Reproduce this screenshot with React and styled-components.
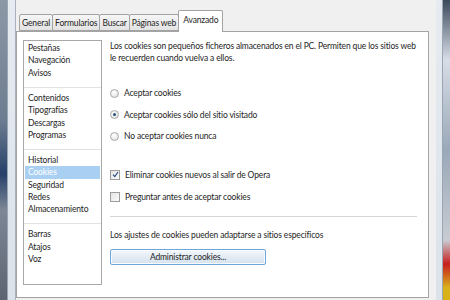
import React from 'react';
import styled, { createGlobalStyle } from 'styled-components';

const GlobalStyle = createGlobalStyle`
    html, body {
        margin: 0;
        padding: 0;
        width: 450px;
        height: 300px;
        overflow: hidden;
    }
    body {
        font-family: 'Lato', 'Noto Sans', sans-serif;
        font-size: 8.5px;
        letter-spacing: -0.15px;
        color: #1e1e1e;
    }
`;

const Screen = styled.div`
    display: flex;
    width: 450px;
    height: 300px;
`;

const Backdrop = styled.div`
    width: ${props => props.width}px;
    background: ${props => props.bg};
`;

const Frame = styled.div`
    flex: 1;
    display: flex;
    padding: 0 6px 0 7px;
    background: linear-gradient(180deg, #e6ebf1 0%, #dbe2ea 100%);
    border-left: 1px solid #9aa6b3;
    border-right: 1px solid #9aa6b3;
`;

const Body = styled.div`
    flex: 1;
    display: flex;
    flex-direction: column;
    background: #f0f0f0;
    border-left: 1px solid #a9b2bc;
    padding: 10px 7px 2px 0;
`;

const TabStrip = styled.div`
    display: flex;
    align-items: flex-end;
    height: 21px;
    padding-left: 3px;
    position: relative;
    z-index: 1;
`;

const Tab = styled.div`
    height: ${props => (props.$active ? 22 : 17)}px;
    padding: ${props => (props.$active ? '4px 4px 0' : '0 2px')};
    display: flex;
    align-items: ${props => (props.$active ? 'flex-start' : 'center')};
    box-sizing: border-box;
    border: 1px solid #a3a3a3;
    border-bottom: ${props => (props.$active ? 'none' : '1px solid #a3a3a3')};
    margin-right: -1px;
    margin-bottom: ${props => (props.$active ? '-1px' : '0')};
    background: ${props => (props.$active ? '#ffffff' : 'linear-gradient(180deg, #f6f6f6 0%, #e3e3e3 100%)')};
    border-radius: 2px 2px 0 0;
    white-space: nowrap;
`;

const Panel = styled.div`
    flex: 1;
    display: flex;
    gap: 8px;
    background: #ffffff;
    border: 1px solid #a3a3a3;
    padding: 8px 6px 12px 6px;
`;

const ListBox = styled.div`
    width: 77px;
    flex-shrink: 0;
    border: 1px solid #a8a8a8;
    background: #ffffff;
`;

const ListGroup = styled.div`
    padding: 4px 1px 7.6px;
    border-bottom: ${props => (props.$last ? 'none' : '1px solid #e2e2e2')};
    &:first-child {
        padding-top: 1px;
    }
`;

const ListItem = styled.div`
    height: 12.4px;
    line-height: 12.4px;
    padding-left: 3px;
    background: ${props => (props.$selected ? '#a9d0f2' : 'transparent')};
    color: ${props => (props.$selected ? '#ffffff' : '#1e1e1e')};
`;

const Content = styled.div`
    flex: 1;
    display: flex;
    flex-direction: column;
    padding-right: 5px;
`;

const Para = styled.p`
    margin: 0;
    line-height: 12px;
`;

const OptionGroup = styled.div`
    display: flex;
    flex-direction: column;
    gap: ${props => props.$gap}px;
    margin-top: ${props => props.$top}px;
`;

const Option = styled.label`
    display: flex;
    align-items: center;
    gap: 5px;
    height: 12px;
`;

const Radio = styled.span`
    width: 7px;
    height: 7px;
    border-radius: 50%;
    border: 1px solid #a8a8a8;
    background: radial-gradient(circle at 40% 35%, #ffffff 0%, #dcdcdc 100%);
    display: flex;
    align-items: center;
    justify-content: center;
    &::after {
        content: '';
        width: 3px;
        height: 3px;
        border-radius: 50%;
        background: ${props => (props.$checked ? '#2a4f7a' : 'transparent')};
    }
`;

const Box = styled.span`
    width: 8px;
    height: 8px;
    border: 1px solid #9c9c9c;
    background: linear-gradient(135deg, #e4e4e4 0%, #fafafa 100%);
    display: flex;
    align-items: center;
    justify-content: center;
`;

const Divider = styled.div`
    height: 1px;
    background: #d6d6d6;
    margin: ${props => props.$margin};
`;

const Button = styled.button`
    width: 156px;
    height: 16px;
    margin-top: 8px;
    padding: 0;
    font-family: inherit;
    font-size: inherit;
    letter-spacing: inherit;
    color: #1e1e1e;
    border: 1px solid #6fa6d6;
    border-radius: 2px;
    background: linear-gradient(180deg, #f3f7fb 0%, #e3ecf4 50%, #d4e2ee 100%);
    box-shadow: inset 0 0 0 1px #f8fbff;
`;

const Check = () => (
    <svg width="7" height="7" viewBox="0 0 7 7">
        <path d="M1 3.6 L2.8 5.6 L6 1" fill="none" stroke="#2b4f82" strokeWidth="1.2" />
    </svg>
);

const groups = [
    ['Pestañas', 'Navegación', 'Avisos'],
    ['Contenidos', 'Tipografías', 'Descargas', 'Programas'],
    ['Historial', 'Cookies', 'Seguridad', 'Redes', 'Almacenamiento'],
    ['Barras', 'Atajos', 'Voz'],
];

const tabs = ['General', 'Formularios', 'Buscar', 'Páginas web', 'Avanzado'];

export default function App() {
    return (
        <>
            <GlobalStyle />
            <Screen>
                <Backdrop width={7} bg="linear-gradient(180deg, #8d98a6 0%, #6d7c90 40%, #27406a 58%, #7d8796 70%, #5d6470 100%)" />
                <Frame>
                    <Body>
                        <TabStrip>
                            {tabs.map(t => (
                                <Tab key={t} $active={t === 'Avanzado'}>{t}</Tab>
                            ))}
                        </TabStrip>
                        <Panel>
                            <ListBox>
                                {groups.map((g, i) => (
                                    <ListGroup key={i} $last={i === groups.length - 1}>
                                        {g.map(item => (
                                            <ListItem key={item} $selected={item === 'Cookies'}>{item}</ListItem>
                                        ))}
                                    </ListGroup>
                                ))}
                            </ListBox>
                            <Content>
                                <Para>
                                    Los cookies son pequeños ficheros almacenados en el PC. Permiten que los sitios web
                                    le recuerden cuando vuelva a ellos.
                                </Para>
                                <OptionGroup $top={23} $gap={9.5}>
                                    <Option><Radio />Aceptar cookies</Option>
                                    <Option><Radio $checked />Aceptar cookies sólo del sitio visitado</Option>
                                    <Option><Radio />No aceptar cookies nunca</Option>
                                </OptionGroup>
                                <OptionGroup $top={26.5} $gap={10}>
                                    <Option><Box><Check /></Box>Eliminar cookies nuevos al salir de Opera</Option>
                                    <Option><Box />Preguntar antes de aceptar cookies</Option>
                                </OptionGroup>
                                <Divider $margin="13px 0 12px" />
                                <Para>Los ajustes de cookies pueden adaptarse a sitios específicos</Para>
                                <Button>Administrar cookies...</Button>
                            </Content>
                        </Panel>
                    </Body>
                </Frame>
                <Backdrop width={7} bg="linear-gradient(180deg, #3c4a5c 0%, #d6dde6 20%, #9aa8b8 50%, #c7ccd3 80%, #c81e1e 88%, #d9b21a 96%)" />
            </Screen>
        </>
    );
}
